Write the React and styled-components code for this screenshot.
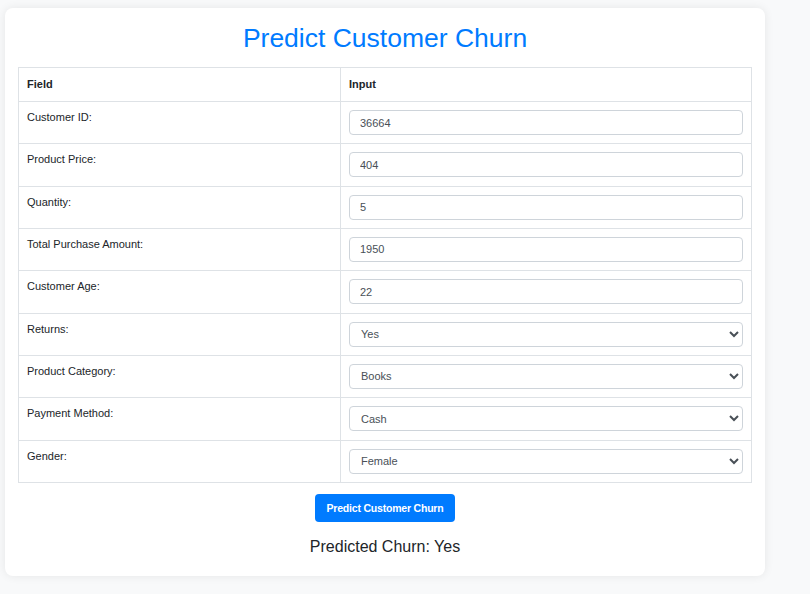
import React, { useState } from 'react';
import styled, { createGlobalStyle } from 'styled-components';

const GlobalStyle = createGlobalStyle`
    body {
        margin: 0;
        background: #f8f9fa;
        font-family: 'Liberation Sans', Arial, sans-serif;
        color: #212529;
    }
`;

const Page = styled.div`
    padding: 8px 45px 18px 5px;
`;

const Card = styled.div`
    width: 760px;
    box-sizing: border-box;
    background: #fff;
    border-radius: 8px;
    box-shadow: 0 0 10px rgba(0, 0, 0, 0.08);
    padding: 14px 13px 20px;
    display: flex;
    flex-direction: column;
    align-items: center;
`;

const Title = styled.h1`
    margin: 0 0 13px;
    font-size: 26.5px;
    font-weight: normal;
    color: #007bff;
    line-height: 32px;
`;

const Table = styled.table`
    width: 100%;
    border-collapse: collapse;
    font-size: 11px;
`;

const Th = styled.th`
    border: 1px solid #dee2e6;
    text-align: left;
    padding: 9px 8px;
    font-weight: bold;
    font-size: 11px;
    line-height: 15px;
    width: ${p => p.$w || 'auto'};
`;

const Td = styled.td`
    border: 1px solid #dee2e6;
    padding: 8px;
    vertical-align: top;
    height: 25.33px;
`;

const Label = styled.label`
    display: block;
    padding-top: 1px;
    font-size: 11px;
    color: #212529;
`;

const TextInput = styled.input`
    display: block;
    width: 100%;
    box-sizing: border-box;
    height: 25px;
    padding: 0 10px;
    border: 1px solid #ced4da;
    border-radius: 4px;
    font-family: 'Liberation Sans', Arial, sans-serif;
    font-size: 11px;
    color: #495057;
`;

const Select = styled.select`
    display: block;
    width: 100%;
    box-sizing: border-box;
    height: 25px;
    padding: 0 7px;
    border: 1px solid #ced4da;
    border-radius: 4px;
    background: #fff;
    font-family: 'Liberation Sans', Arial, sans-serif;
    font-size: 11px;
    color: #495057;
`;

const Button = styled.button`
    margin-top: 11px;
    background: #007bff;
    color: #fff;
    border: none;
    border-radius: 4px;
    padding: 0 12px;
    height: 28px;
    font-family: 'Liberation Sans', Arial, sans-serif;
    font-weight: bold;
    font-size: 10.5px;
    letter-spacing: -0.2px;
    cursor: pointer;
`;

const Result = styled.p`
    margin: 16px 0 0;
    font-size: 16px;
    color: #212529;
`;

const fields = [
    { label: 'Customer ID:', type: 'text', value: '36664' },
    { label: 'Product Price:', type: 'text', value: '404' },
    { label: 'Quantity:', type: 'text', value: '5' },
    { label: 'Total Purchase Amount:', type: 'text', value: '1950' },
    { label: 'Customer Age:', type: 'text', value: '22' },
    { label: 'Returns:', type: 'select', value: 'Yes', options: ['Yes', 'No'] },
    { label: 'Product Category:', type: 'select', value: 'Books', options: ['Books', 'Clothing', 'Electronics', 'Home'] },
    { label: 'Payment Method:', type: 'select', value: 'Cash', options: ['Cash', 'Credit Card', 'PayPal', 'Crypto'] },
    { label: 'Gender:', type: 'select', value: 'Female', options: ['Female', 'Male'] },
];

export default function App() {
    const [values, setValues] = useState(fields.map(f => f.value));
    const update = (idx, v) => setValues(vals => vals.map((x, i) => (i === idx ? v : x)));

    return (
        <Page>
            <GlobalStyle />
            <Card>
                <Title>Predict Customer Churn</Title>
                <Table>
                    <thead>
                        <tr>
                            <Th $w="305px">Field</Th>
                            <Th>Input</Th>
                        </tr>
                    </thead>
                    <tbody>
                        {fields.map((f, idx) => (
                            <tr key={f.label}>
                                <Td><Label>{f.label}</Label></Td>
                                <Td>
                                    {f.type === 'select' ? (
                                        <Select value={values[idx]} onChange={e => update(idx, e.target.value)}>
                                            {f.options.map(o => <option key={o}>{o}</option>)}
                                        </Select>
                                    ) : (
                                        <TextInput value={values[idx]} onChange={e => update(idx, e.target.value)} />
                                    )}
                                </Td>
                            </tr>
                        ))}
                    </tbody>
                </Table>
                <Button>Predict Customer Churn</Button>
                <Result>Predicted Churn: Yes</Result>
            </Card>
        </Page>
    );
}
